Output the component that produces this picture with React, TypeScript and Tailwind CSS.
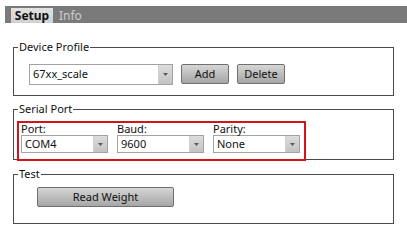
const Arrow = () => (
  <svg width="5" height="3" viewBox="0 0 5 3">
    <path d="M0 0h5L2.5 3z" fill="#5a5a5a" />
  </svg>
);

const Combo = ({ value, className }: { value: string; className: string }) => (
  <div className={`flex border border-[#a3a3a3] bg-white ${className}`}>
    <span className="flex flex-1 items-center pl-[3px]">{value}</span>
    <span className="flex w-[14px] items-center justify-center border-l border-[#cfcfcf] bg-gradient-to-b from-[#dcdcdc] to-[#c3c3c3]">
      <Arrow />
    </span>
  </div>
);

const Button = ({ label, className }: { label: string; className: string }) => (
  <button className={`rounded-[2px] border border-[#6f6f6f] bg-gradient-to-b from-[#d6d6d6] to-[#a6a6a6] text-[#111] ${className}`}>
    {label}
  </button>
);

// padding goes on the inner div so the legend stays at the left edge
const Group = ({ title, className, children }: { title: string; className: string; children: React.ReactNode }) => (
  <fieldset className={`ml-[13px] w-[381px] border border-[#4a4a4a] ${className}`}>
    <legend className="ml-[4px] px-[1px] leading-[14px] text-[#111]">{title}</legend>
    {children}
  </fieldset>
);

export default function App() {
  return (
    <div className="h-[252px] w-[407px] overflow-hidden bg-white pt-[6px] font-['Noto_Sans',sans-serif] text-[11px] text-[#111]">
      <div className="ml-[5px] flex h-[17px] items-end bg-[#7a7a7a] pl-[6px]">
        <div className="flex h-[15px] w-[42px] items-center justify-center bg-gradient-to-b from-[#e2e2e2] to-[#d0d0d0] text-[12px] font-bold leading-none">
          Setup
        </div>
        <div className="ml-[6px] flex h-[15px] items-center text-[12px] leading-none text-[#cdcdcd]">Info</div>
      </div>

      <Group title="Device Profile" className="mt-[17px]">
        <div className="flex items-start pb-[10px] pl-[15px] pt-[10px]">
          <Combo value="67xx_scale" className="h-[21px] w-[144px]" />
          <Button label="Add" className="ml-[8px] h-[20px] w-[48px]" />
          <Button label="Delete" className="ml-[8px] h-[20px] w-[48px]" />
        </div>
      </Group>

      <Group title="Serial Port" className="mt-[6px]">
        <div className="pl-[3px] pt-[5px]">
          <div className="mb-[-2px] w-[289px] border-2 border-[#d3141b] pb-[6px] pl-[2px] pr-[4px]">
            <div className="flex gap-[9px]">
              {[
                ['Port:', 'COM4'],
                ['Baud:', '9600'],
                ['Parity:', 'None'],
              ].map(([label, value]) => (
                <div key={label} className="w-[87px]">
                  <div className="h-[12px] leading-[12px]">{label}</div>
                  <Combo value={value} className="h-[18px] w-[87px]" />
                </div>
              ))}
            </div>
          </div>
        </div>
      </Group>

      <Group title="Test" className="mt-[7px]">
        <div className="pb-[16px] pl-[23px] pt-[6px]">
          <Button label="Read Weight" className="h-[20px] w-[137px]" />
        </div>
      </Group>
    </div>
  );
}
